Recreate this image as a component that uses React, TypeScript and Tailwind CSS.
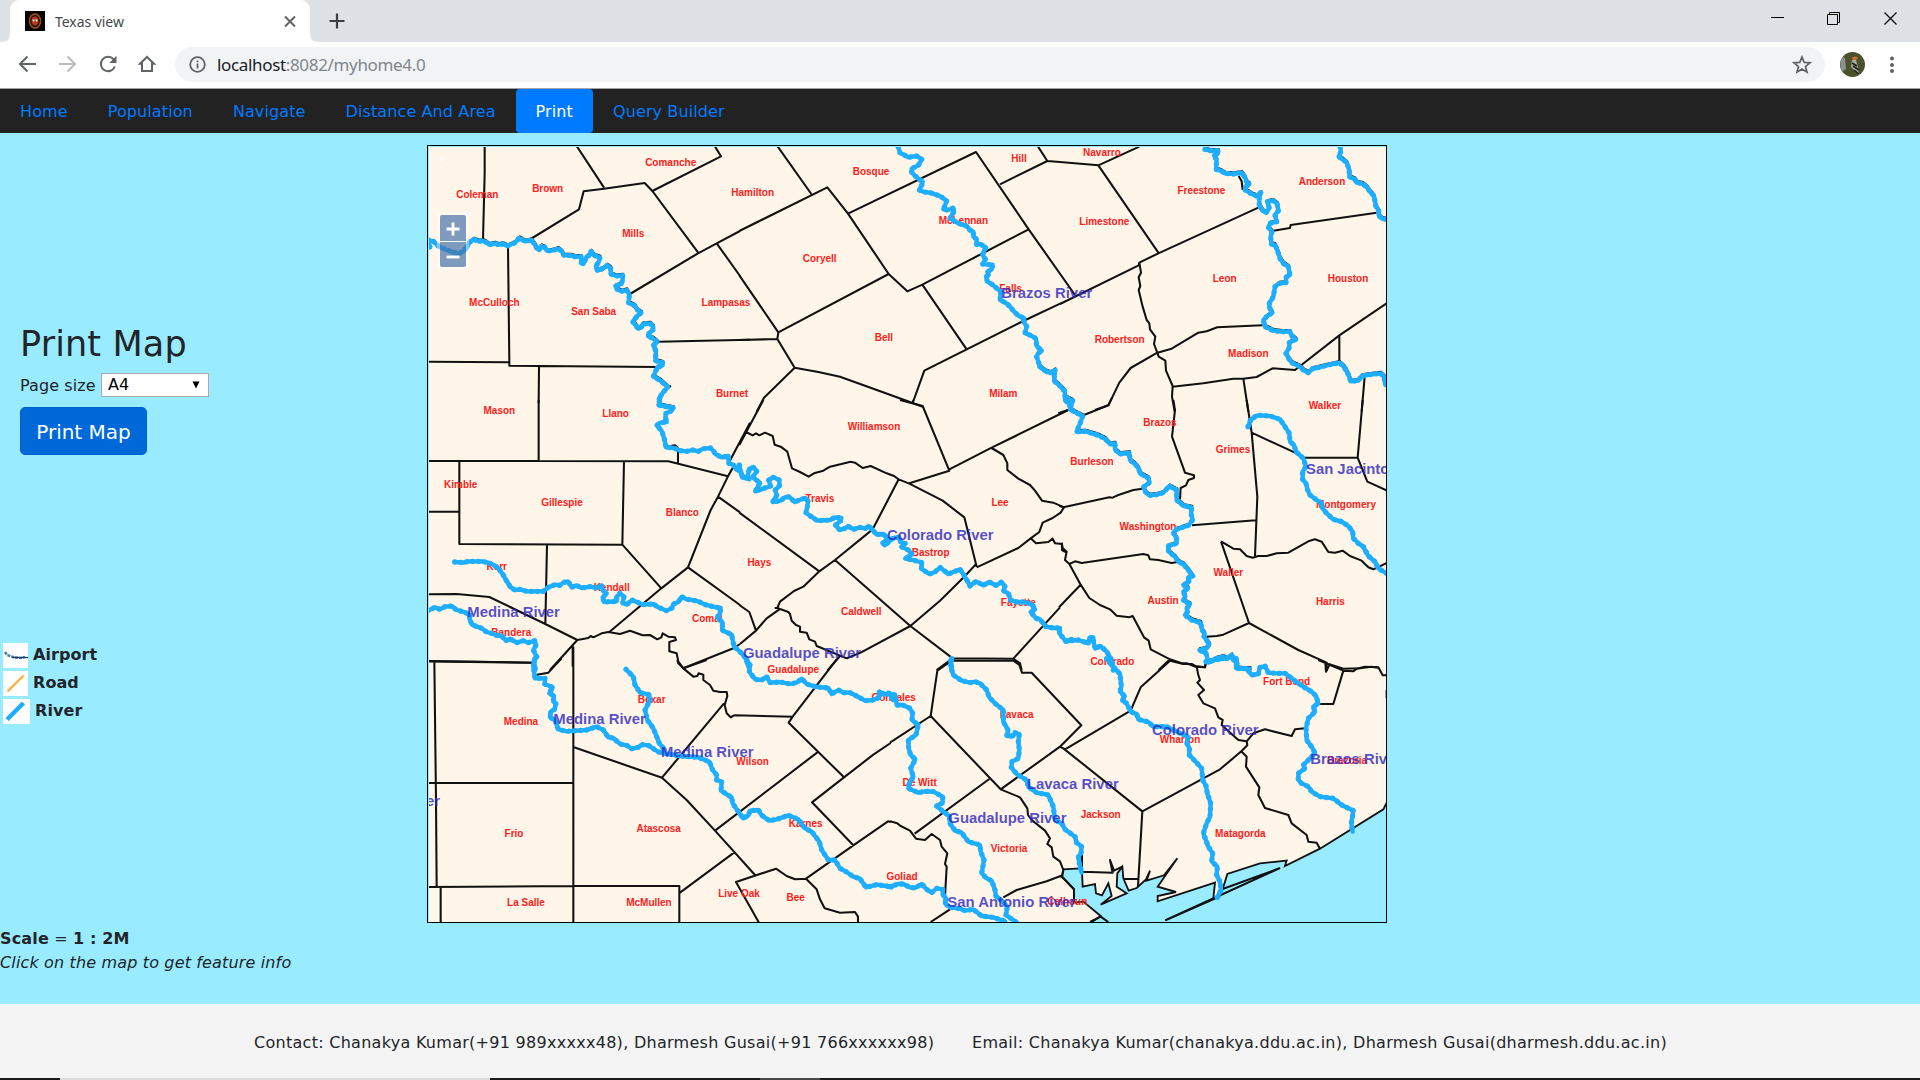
import React from "react";

type Label = [string, number, number];
interface Sheet {
  x: number;
  y: number;
  borders: string;
  rivers: string;
  shaded?: string;
  counties: Label[];
  names: Label[];
}

// Map sheets: every sheet is drawn at three units per pixel from its own origin.
const sheets: Sheet[] = [
  {
    x: 420,
    y: 140,
    borders:
      "M194 18L194 100L189 300M470 18L552 143M332 297L477 208L491 154L552 146L674 129L697 153L903 49L884 18M697 153L834 337M630 462L834 340L890 310L960 273M890 310L960 408M715 605L990 599M264 320L268 667L268 677L715 681M24 665L268 667M357 680L356 790M748 736L752 742",
    rivers: "M24 302L30 322M24 300L40 304L55 318L75 328L95 335L115 341L130 334L140 322",
    shaded:
      "M140 322L148 308L160 298L178 304L188 302L200 308L208 314L225 310L235 314L250 312L262 318L285 308L298 294L315 304L335 300L343 312L350 324L358 330L364 318L374 322L380 332L395 332L415 326L425 334L432 346L450 346L465 350L483 350L484 368L490 372L500 350L508 346L513 334L522 346L540 352L536 366L528 378L532 392L548 386L562 376L572 384L572 402L590 408L608 406L608 418L604 432L586 438L592 448L604 454L620 450L628 464L626 488L645 498L650 508L664 518L652 528L638 545L655 566L664 562L668 552L690 550L700 560L698 572L688 578L684 588L700 596L712 606L700 616L708 634L706 662L728 668L728 676L712 682L700 710L722 722L744 742L732 754L722 768L716 795L740 800L760 804",
    counties: [
      ["Coleman", 172, 174], ["Brown", 383, 155], ["Comanche", 752, 78], ["Mills", 640, 291],
      ["McCulloch", 223, 496], ["San Saba", 521, 525], ["Lampasas", 918, 498], ["Burnet", 936, 770],
    ],
    names: [],
  },
  {
    x: 740,
    y: 140,
    borders:
      "M112 18L214 162M-2 273L262 142L324 221L446 402L502 454L547 434L866 268L708 36L324 221M866 268L1005 465M780 133L922 63L893 18M922 63L960 66M446 402L115 577L112 597L164 683L235 696L300 710L400 746L518 789L548 800M-2 600L112 597M-2 406L115 577M547 434L680 628L553 692L518 789M680 628L850 543L962 490M164 683L72 773L50 815",
    rivers:
      "M474 20L480 38L495 46L505 52L530 48L545 58L535 76L515 86L515 96L525 108L548 125L545 136L538 150L552 156L570 158L600 168L620 182L616 194L610 208L624 210L640 204L642 214L630 235L655 250L680 258L690 270L700 275L700 290L710 298L710 314L720 312L738 322L732 332L728 345L736 358L728 372L745 374L758 374L755 388L742 396L746 404L738 410L742 424L760 436L782 455L780 480L800 490L808 498L820 512L836 528L852 534L852 548L860 558L855 580L872 586L888 596L890 618L905 632L894 640L890 650L900 680L922 696",
    shaded: "M900 680L912 690L922 696L932 698L945 690L942 722L962 740L975 755L975 780L988 792L992 808",
    counties: [
      ["Hamilton", 38, 167], ["Bosque", 393, 104], ["Hill", 837, 64], ["McLennan", 670, 252],
      ["Coryell", 239, 366], ["Falls", 812, 454], ["Bell", 432, 601], ["Milam", 790, 771],
    ],
    names: [["Brazos River", 784, 476]],
  },
  {
    x: 1060,
    y: 140,
    borders:
      "M0 66L115 76L238 20M115 76L295 338M0 492L236 376L238 368L295 340L595 203M238 368L243 398L236 412L241 438L236 450L248 500L260 540L268 550L270 568L286 590L282 612L292 638L296 650L316 662L318 692L338 738L336 770L344 815M292 638L335 626L415 578L440 574L472 562L608 556M292 638L212 684L178 728L145 796L105 810M338 740L430 730L520 716L550 716L590 711L638 685L705 690L838 586L838 668M838 586L980 490M550 716L565 815M640 272L690 264L692 255L950 218M914 710L905 815M536 108L545 124L548 150",
    rivers: "",
    shaded:
      "M435 28L450 32L475 32L474 40L462 46L470 60L468 88L482 92L495 100L520 102L545 98L555 112L560 126L568 132L556 140L556 150L575 162L590 168L602 158L598 172L598 195L608 212L618 218L628 205L622 185L640 182L652 192L655 212L645 225L650 245L630 250L625 262L636 275L632 290L634 312L645 315L652 330L660 355L670 370L685 380L690 405L678 412L678 428L658 430L645 440L640 470L628 490L628 502L637 518L622 528L610 540L615 560L640 572L665 575L690 575L694 586L708 598L688 608L688 622L678 640L685 654L695 668L720 680L730 690L745 698L758 686L770 684L800 676L838 668L852 680L862 698L868 710L872 724L895 722L905 708L930 704L962 700L972 710L976 735M840 20L843 34L836 50L848 58L860 68L868 90L868 110L885 118L890 128L905 130L920 140L930 155L942 168L948 200L956 212L956 226L966 236L980 238",
    counties: [
      ["Navarro", 126, 48], ["Freestone", 424, 162], ["Anderson", 786, 133], ["Limestone", 133, 254],
      ["Leon", 494, 425], ["Houston", 864, 424], ["Robertson", 179, 607], ["Madison", 565, 650],
      ["Walker", 795, 805],
    ],
    names: [],
  },
  {
    x: 420,
    y: 400,
    borders:
      "M356 0V182M24 183L356 183L745 184L924 229M118 184V432L607 434L612 184M24 335H118M738 140L765 136L774 144V188M990 68L928 185M940 200L924 229L894 290L872 330L804 502L724 565L568 696M894 290L960 337M607 434L724 565M381 434L376 672M804 502L960 615M24 583L110 582L208 591L376 672L472 720L505 714L512 708L520 712L545 700L565 696L600 702L630 692L668 706L690 705L712 718L724 712L728 700L745 710L765 712L768 720L748 726L748 754L770 760L775 785L790 805L942 744L960 732M472 720L390 810M458 735V800M24 784L338 788",
    rivers:
      "M718 -4L718 15L740 20L760 24L752 34L738 40L736 52L740 66L722 68L710 76L726 94L730 108L734 120L738 142L762 144L780 152L800 154L818 150L835 154L850 146L872 144L880 152L886 162L905 172L925 168L926 190L940 194L948 208L960 212L968 230L988 238M104 486L130 488L145 484L165 484L185 484L205 488L220 494L235 505L248 522L258 540L272 562L285 570L300 568L320 574L345 574L370 574L385 562L405 554L420 556L430 548L444 544L455 562L470 556L485 564L510 560L530 564L545 558L548 570L560 580L548 592L552 606L590 604L590 590L600 580L612 590L608 608L620 614L636 600L650 606L670 614L700 612L715 622L740 632L756 624L760 612L775 606L785 590L800 598L815 600L835 604L855 614L880 620L902 624L900 640L892 652L908 668L906 690L935 704L942 740L960 755L978 775L985 800M24 632L45 622L60 628L75 620L95 618L110 630L132 636L150 644L148 655L156 674L185 685L200 696L215 700L228 706L245 708L258 722L270 716L290 728L310 722L325 728L345 722L348 735L340 750L350 770L342 785L346 810",
    counties: [
      ["Mason", 238, 41], ["Llano", 587, 50], ["Kimble", 122, 264], ["Gillespie", 426, 316],
      ["Blanco", 787, 348], ["Kerr", 230, 510], ["Kendall", 575, 571], ["Comal", 862, 664], ["Bandera", 274, 706],
    ],
    names: [["Medina River", 142, 651]],
  },
  {
    x: 740,
    y: 400,
    borders:
      "M70 0L-2 135M18 96L38 106L48 100L58 106L75 98L98 108L104 134L122 140L142 155L156 205L180 216L206 230L222 220L250 212L270 200L332 185L345 188L368 204L392 198L440 220L462 228L476 238L508 251L608 302L673 352L710 500M476 238L398 388L285 480L238 514L190 560L162 573L120 605L112 624L104 624M112 624L145 636L150 642L155 662L168 675L180 680L180 695L200 698L208 718L225 725L230 738L320 775L362 758L511 678L285 480M118 628L80 655L48 692L0 732M-2 615L28 636L48 692M-2 338L238 514M480 0L548 18L628 212L508 250M628 208L755 143L985 30M755 144L790 165L802 190L802 210L835 236L870 255L885 272L906 302L940 308L972 322L962 338L938 354L908 368L898 396L872 415L835 444L710 502M872 415L888 430L925 426L938 416L945 430L966 432L966 450L980 458M710 490L675 528L600 602L511 678L638 775L820 776L960 622M638 775L590 810M820 776L840 790L845 810M300 768L262 812M520 0L518 10",
    rivers:
      "M-2 195L2 215L8 232L22 232L28 206L42 202L50 214L38 232L60 248L46 274L75 264L92 258L86 240L100 232L118 240L118 258L106 270L110 286L98 306L122 302L134 292L148 290L164 306L178 300L196 294L204 304L202 320L198 338L214 350L232 362L270 360L285 352L304 354L302 362L286 376L300 390L318 384L324 378L340 388L360 382L376 386L386 378L400 392L410 404L430 402L444 416L428 428L434 436L460 414L478 412L482 426L496 430L484 440L505 450L515 462L496 476L520 480L546 488L544 506L568 522L585 516L600 502L625 522L645 514L660 508L675 530L690 558L708 544L730 556L748 546L768 556L785 546L795 560L790 572L805 580L812 600L830 606L850 606L875 612L885 628L872 636L888 655L900 658L918 680L940 684L960 684L958 700L978 724L995 718M632 782L636 810",
    counties: [
      ["Williamson", 402, 88], ["Travis", 240, 306], ["Lee", 780, 318], ["Bastrop", 572, 467],
      ["Hays", 58, 498], ["Caldwell", 364, 643], ["Fayette", 835, 618],
    ],
    names: [["Colorado River", 441, 421], ["Guadalupe River", 9, 774]],
  },
  {
    x: 1060,
    y: 400,
    borders:
      "M-5 40L30 28M70 46L145 16L155 -5M340 0L345 30L336 110L375 218L402 226L402 234L385 240L378 256L362 264L360 298M560 0L575 98L592 290L585 468M575 98L705 158L730 173H893L908 0M893 173L922 245L982 272M10 322L148 292L158 293L175 285L220 270L248 266M-2 318L12 322M396 376L587 361M5 428L8 444L20 455L15 480L28 492L45 484L65 489L250 462L265 466L270 478L295 480L335 489L352 486M28 492L62 554L88 594L120 615L150 628L170 647L208 652L218 648L252 712L266 722L272 748L330 778L365 790L380 790L405 800L435 802L438 786M62 554L-3 622M330 778L296 810M483 424L520 446L540 448L560 468L578 473L595 468L620 468L650 460L685 458L745 424L765 418L785 425L805 456L825 458L848 452L870 468L905 482L925 502L940 508L982 488M483 424L567 669L715 750L800 788V812M438 710L470 708L490 704L567 669M806 792L850 806L900 805L935 800L955 803",
    rivers:
      "M564 80L572 60L585 50L595 46L630 48L660 58L675 80L688 100L690 125L702 135L708 155L730 175L738 200L728 215L728 238L738 250L742 268L750 285L770 300L785 310L788 325L800 340L820 358L845 365L865 378L878 395L880 415L895 430L910 440L925 468L945 485L955 505L980 520M18 724L55 720L85 730L88 714L100 712L100 722L106 746L122 738L140 755L155 780L160 810",
    shaded:
      "M22 -6L38 2L30 28L45 36L68 48L62 66L50 95L75 94L90 98L115 106L135 116L150 132L165 130L165 148L180 162L208 158L210 180L225 192L236 205L240 220L266 235L268 248L250 262L258 278L268 286L290 284L310 278L328 258L350 270L350 300L372 318L395 322L393 340L398 360L385 376L350 388L340 398L350 415L350 430L324 438L326 455L345 470L355 485L370 492L385 510L398 528L385 532L388 545L370 555L384 565L370 575L376 590L370 602L390 612L380 625L382 636L375 645L395 660L422 668L426 690L434 700L432 710L448 732L440 745L418 750L438 760L445 788L460 780L470 775L490 770L500 776L515 765L518 778L530 785L528 804L548 806L570 806",
    counties: [
      ["Brazos", 300, 78], ["Burleson", 96, 193], ["Grimes", 519, 159], ["Montgomery", 858, 323],
      ["Washington", 264, 388], ["Waller", 505, 526], ["Austin", 309, 612], ["Harris", 811, 614],
      ["Colorado", 157, 793],
    ],
    names: [["San Jacinto River", 738, 223]],
  },
  {
    x: 420,
    y: 660,
    borders:
      "M24 3L338 8L342 46L385 38L425 -5M43 3L48 420L50 680M460 -40V790M24 369H460M24 681L460 678H778V790M62 681V790M462 262L726 353L800 420L885 512L1005 645M726 353L912 130M885 512L1195 275M942 578L780 698M772 0L775 10L790 25L820 50L832 48L836 40L850 44L850 60L870 75L880 92L900 96L920 96L922 108L914 135L920 160L932 172L942 166L1118 170L1106 188L1272 352L1360 284L1412 249M790 25L860 0M1118 170L1250 -2M1272 352L1176 427L1300 556M1018 790L948 666L1068 626L1100 648L1125 658L1158 656L1300 556L1404 484L1412 486M1158 656L1190 688L1200 718L1214 745L1260 758L1305 756L1314 770V790",
    rivers:
      "M980 0L990 15L988 35L1005 58L1025 60L1040 50L1050 68L1080 66L1110 72L1130 68L1145 56L1160 72L1185 80L1225 84L1235 102L1255 90L1270 98L1290 98L1310 108L1335 122L1360 120L1378 112L1378 94L1395 104L1410 100L1418 120M345 -4L340 20L345 55L375 55L374 72L398 82L388 100L402 108L400 125L408 130L404 148L392 155L390 172L405 180L415 208L440 214L500 210L530 200L550 210L565 232L580 234L600 252L620 256L635 266L655 262L665 254L685 256L715 276L780 288L835 292L868 305L878 330L890 345L890 360L905 365L903 392L935 412L938 430L955 455L970 475L985 466L990 452L1015 450L1025 466L1048 482L1070 478L1105 466L1135 478L1155 505L1175 515L1198 545L1205 570L1225 600L1245 600L1260 625L1280 636L1300 650L1320 656L1338 682L1370 674L1400 678L1415 682M618 28L640 50L645 75L660 98L688 104L690 120L675 150L682 180L700 205L718 250L735 270",
    counties: [
      ["Guadalupe", 1120, 39], ["Gonzales", 1421, 122], ["Bexar", 695, 128], ["Medina", 303, 193],
      ["Wilson", 998, 315], ["Atascosa", 716, 514], ["Frio", 282, 529], ["Karnes", 1157, 500],
      ["La Salle", 318, 736], ["McMullen", 687, 736], ["Live Oak", 957, 710], ["Bee", 1127, 723],
    ],
    names: [["Medina River", 400, 194], ["Medina River", 723, 293]],
  },
  {
    x: 890,
    y: 660,
    borders:
      "M0 248L122 168L142 32L185 2H370L388 15L396 38L425 38L574 196L510 260L332 388L122 168M510 260L525 268L722 152L752 82L840 2L880 12L905 12L920 20L925 45L930 60L922 68L942 90L925 105L940 130L975 145L985 172L998 180L995 195L1045 240L1070 244L1090 220L1125 208L1205 228L1215 208L1245 205M915 18L945 22L948 0M520 265L757 454L990 328L1054 274L1072 256L1070 244M757 454L744 680M700 657H744M298 357L74 521M332 388L390 412L412 445L414 465L425 480L465 512L480 535L472 552L485 562L490 590L510 604L520 630L516 650L552 688V728M0 484L22 490L32 498L60 512L78 536L105 540L125 522L150 540L155 560L172 580L165 612L170 620L165 710M122 786L180 748M340 712L380 690L470 664L520 645M1054 274L1070 290L1068 320L1108 382L1105 405L1125 444L1195 465L1205 490L1250 525L1255 545L1280 548L1290 566M1285 0L1360 32L1330 132H1290M1306 8L1308 35L1318 15M1360 32L1390 34L1400 26L1425 20L1465 22L1478 46L1492 46M1490 90V115M578 635L668 638L660 600L672 632L697 620M576 570V640M996 688L1168 625L828 780L990 709M600 786L632 770L655 786",
    rivers:
      "M650 -4L665 15L690 42L692 60L694 80L690 95L704 108L697 122L710 130L722 155L740 162L745 178L775 186L790 200L830 200L860 215L895 230L890 248L898 265L898 285L920 308L935 325L938 360L948 378L952 400L962 430L960 470L950 490L940 520L955 560L968 580L965 604L982 620L980 645L990 665L993 690L982 712M948 5L975 0L1005 -5L1022 -10L1040 -4L1042 25L1070 25L1085 45L1105 42L1110 22L1125 18L1135 38L1160 40L1185 40L1205 55L1225 70L1240 80L1265 95L1278 108L1285 130L1270 140L1275 155L1255 175L1248 205L1250 240L1268 265L1275 280L1255 300L1240 315L1245 325L1225 340L1225 360L1235 370L1255 380L1265 395L1290 410L1330 415L1355 435L1390 452L1384 490L1388 515M-5 100L15 105L20 135L38 135L60 145L68 160L66 180L85 195L78 225L55 240L56 265L62 285L76 298L62 325L70 350L58 370L55 385L85 398L105 394L130 395L158 410L158 428L140 438L160 455L178 468L180 490L195 512L215 518L235 545L270 555L272 575L282 600L275 640L290 655L305 662L315 690L318 708L335 722L352 740L348 765L378 786M0 680L25 672L40 672L60 682L75 684L95 672L110 688L125 698L140 685L158 688L158 702L168 715L165 730L180 742L210 746L225 752L250 748L275 768L310 772L345 784M185 -4L182 20L190 45L215 62L240 68L255 65L270 70L290 90L298 112L315 130L340 150L340 185L355 212L350 228L370 228L375 218L388 222L385 245L388 270L385 295L366 305L364 322L380 342L410 360L415 380L440 398L475 405L490 440L495 480L515 490L525 508L555 530L560 548L575 560L573 580L565 590L568 610L575 638",
    counties: [
      ["Fort Bend", 1190, 74], ["Lavaca", 380, 173], ["Wharton", 870, 247], ["De Witt", 89, 378],
      ["Brazoria", 1371, 310], ["Jackson", 632, 472], ["Matagorda", 1051, 529], ["Victoria", 357, 576],
      ["Goliad", 36, 658], ["Calhoun", 532, 735],
    ],
    names: [
      ["Colorado River", 786, 225], ["Brazos River", 1261, 314], ["Lavaca River", 411, 387],
      ["Guadalupe River", 175, 491], ["San Antonio River", 172, 741],
    ],
  },
];

const bay =
  "M1494 420L1480 448L1290 566L1185 618L1190 602L1110 610L1012 642L998 688L982 712L970 715L975 668L803 724V708L858 696L803 680L862 595L822 646L770 662L780 632L768 658L740 684L716 692L700 655L697 620L682 640L680 680L710 700L632 734L665 708L655 670L636 706L618 700L615 672L578 680L576 636L570 625L520 628L516 650L552 688V728L580 725L632 768L600 790H1494Z";

const at = (s: { x: number; y: number }) => `translate(${s.x} ${s.y}) scale(0.33333)`;

function TexasMap() {
  return (
    <svg className="block h-[775px] w-[957px]" viewBox="429 147 957 775" fontFamily="'Liberation Sans', Arial, sans-serif" fontWeight="700">
      <rect x="429" y="147" width="957" height="775" fill="#fff6e9" />
      <path transform="translate(890 660) scale(0.33333)" d={bay} fill="#99ebff" stroke="#111" strokeWidth="5.5" />
      <g fill="none" stroke="#111" strokeWidth="6.2" strokeLinejoin="round">
        {sheets.map((s, i) => (
          <path key={i} transform={at(s)} d={s.borders} />
        ))}
      </g>
      <g fill="#ff2020" fontSize="30" textAnchor="middle">
        {sheets.map((s, i) => (
          <g key={i} transform={at(s)}>
            {s.counties.map(([t, x, y]) => (
              <text key={t} x={x} y={y + 1}>{t}</text>
            ))}
          </g>
        ))}
      </g>
      <g fill="none" strokeLinejoin="round" strokeLinecap="round">
        {sheets.map((s, i) => (
          <g key={i} transform={at(s)}>
            {s.shaded && <path d={s.shaded} transform="translate(1.5 -5)" stroke="#111" strokeWidth="6" />}
            <path d={s.rivers + (s.shaded ?? "")} stroke="#1eaeff" strokeWidth="13" />
            <path d={s.rivers + (s.shaded ?? "")} stroke="#1eaeff" strokeWidth="16" strokeDasharray="1 17" />
          </g>
        ))}
      </g>
      <g fill="#2f2abf" fillOpacity="0.82" fontSize="44.6">
        {sheets.map((s, i) => (
          <g key={i} transform={at(s)}>
            {s.names.map(([t, x, y], k) => (
              <text key={k} x={x} y={y - 1}>{t}</text>
            ))}
          </g>
        ))}
        <text transform="translate(420 660) scale(0.33333)" x="60" y="439" fontSize="44.6" textAnchor="end">River</text>
      </g>
      <circle cx="441.5" cy="159" r="2.5" fill="#fff" fillOpacity="0.7" />
    </svg>
  );
}

function BrowserBar() {
  const s = { fill: "none", stroke: "#5f6368", strokeWidth: 2 } as const;
  return (
    <div className="font-['Noto_Sans',sans-serif]">
      <div className="flex h-[42px] bg-[#dee1e6] pl-[10px]">
        <div className="relative flex w-[300px] items-center rounded-t-[9px] bg-white pl-[15px] pr-[13px]">
          <svg className="absolute -left-[8px] bottom-0" width="8" height="8"><path d="M8 0V8H0Q8 8 8 0" fill="#fff" /></svg>
          <svg className="absolute -right-[8px] bottom-0" width="8" height="8"><path d="M0 0V8H8Q0 8 0 0" fill="#fff" /></svg>
          <svg width="20" height="20" viewBox="0 0 20 20">
            <rect width="20" height="20" fill="#050403" />
            <ellipse cx="10" cy="10" rx="5.6" ry="7" fill="#2a1304" stroke="#9a5312" strokeWidth="1.4" />
            <ellipse cx="10" cy="10" rx="3.4" ry="4.4" fill="#b03a20" />
            <circle cx="8.6" cy="9.4" r="1.1" fill="#e8d8d8" />
            <circle cx="11.6" cy="9.4" r="1.1" fill="#e8d8d8" />
          </svg>
          <span className="ml-[10px] flex-1 whitespace-nowrap text-[14px] tracking-[-0.05px] text-[#45494d]">Texas view</span>
          <svg width="14" height="14" viewBox="0 0 14 14" {...s}><path d="M2 2.5L12 12.5M12 2.5L2 12.5" /></svg>
        </div>
        <svg className="ml-[19px] mt-[13px]" width="16" height="16" viewBox="0 0 16 16" stroke="#3c4043" strokeWidth="2.2"><path d="M8 .5V15.5M.5 8H15.5" /></svg>
        <div className="ml-auto flex gap-[42px] pr-[22px] pt-[11px]">
          <svg width="14" height="14" stroke="#000"><path d="M0 6.5H13" /></svg>
          <svg width="14" height="14" stroke="#000" fill="none"><path d="M.5 3.5H10.5V13.5H.5ZM2.5 3.5V1.5H12.5V11.5H10.5" /></svg>
          <svg className="ml-px" width="14" height="14" stroke="#000" strokeWidth="1.2"><path d="M.5 1.5L12.5 13.5M12.5 1.5L.5 13.5" /></svg>
        </div>
      </div>
      <div className="flex h-[46px] items-start bg-white pl-[18px]">
        <svg className="mt-[13px]" width="18" height="18" viewBox="0 0 18 18" {...s}><path d="M18 9H2.5M9.5 1.5L2 9L9.5 16.5" /></svg>
        <svg className="ml-[23px] mt-[13px]" width="18" height="18" viewBox="0 0 18 18" {...s} stroke="#babcbe"><path d="M0 9H15.5M8.5 1.5L16 9L8.5 16.5" /></svg>
        <svg className="ml-[22px] mt-[13px]" width="18" height="18" viewBox="0 0 18 18" {...s}><path d="M15.8 11.5A7.2 7.2 0 1 1 14.6 4.4" /><path d="M17.5 .8V8H10.3Z" fill="#5f6368" stroke="none" /></svg>
        <svg className="ml-[21px] mt-[13px]" width="18" height="18" viewBox="0 0 18 18" {...s}><path d="M9 2L16 8.8H14V16H4V8.8H2Z" /></svg>
        <div className="ml-[19px] mt-[5px] flex h-[35px] w-[1650px] items-center rounded-full bg-[#f1f3f4] pl-[14px] pr-[13px]">
          <svg width="17" height="17" viewBox="0 0 17 17" {...s} strokeWidth="1.8"><circle cx="8.5" cy="8.5" r="7.3" /><path d="M8.5 7.5V12.5M8.5 4.5V6.2" /></svg>
          <span className="ml-[11px] flex-1 whitespace-nowrap text-[17px] tracking-[-0.34px] text-[#80868b]"><span className="text-[#202124]">localhost</span>:8082/myhome4.0</span>
          <svg width="20" height="20" viewBox="0 0 20 20" {...s} strokeWidth="1.7"><path d="M10 2L12.2 7.4L18 7.8L13.5 11.5L15 17.2L10 14.1L5 17.2L6.500 11.5L2 7.8L7.8 7.4Z" /></svg>
        </div>
        <svg className="ml-[15px] mt-[10px] rounded-full" width="25" height="25" viewBox="0 0 25 25">
          <rect width="25" height="25" fill="#4a522c" />
          <path d="M0 4L5 6L6 17L1 20Z" fill="#8c8f90" />
          <path d="M12 8L16 8L18 15L19 23L15 19L11 15Z" fill="#a9a69e" />
          <path d="M13 14L19 18M14 18L19 22M12 11L17 14" stroke="#23211c" strokeWidth="1.6" />
          <path d="M12 6Q15 3 18 6L16 8H13Z" fill="#d86a35" />
        </svg>
        <svg className="ml-[24px] mt-[14px]" width="6" height="18" fill="#5f6368"><circle cx="3" cy="2.500" r="2" /><circle cx="3" cy="9" r="2" /><circle cx="3" cy="15" r="2" /></svg>
      </div>
    </div>
  );
}

const nav = ["Home", "Population", "Navigate", "Distance And Area", "Print", "Query Builder"];

export default function App() {
  return (
    <div className="flex h-[1080px] w-[1920px] flex-col overflow-hidden bg-[#99ebff] font-['DejaVu_Sans',Verdana,sans-serif] text-base text-[#212529]">
      <BrowserBar />
      <nav className="flex h-[45px] border-t border-[#a3a3a3] bg-[#222]">
        {nav.map((n) => (
          <a key={n} className={n === "Print" ? "h-[44px] rounded-[4px] bg-[#007bff] px-5 text-[16px]/[46px] tracking-[0.11px] text-white" : "px-5 text-[16px]/[46px] tracking-[0.11px] text-[#007bff]"}>{n}</a>
        ))}
      </nav>
      <main className="flex h-[790px] shrink-0">
        <aside className="flex w-[427px] flex-col">
          <h2 className="ml-5 mt-[190px] text-[35px]/[42px] tracking-[0.14px]">Print Map</h2>
          <div className="ml-5 mt-[8px] flex h-[24px] items-center">
            <span className="w-[81px] whitespace-nowrap pt-[2px] tracking-[0.1px]">Page size</span>
            <div className="flex h-[24px] w-[108px] items-center justify-between border border-[#a9a9a9] bg-white pl-[6px] pr-[8px] text-black">
              <span>A4</span>
              <svg width="8" height="8"><path d="M.5 .5H7.500L4 7.500Z" /></svg>
            </div>
          </div>
          <button className="ml-5 mt-[10px] h-[48px] w-[127px] rounded-[5px] border border-[#0062cc] bg-[#0069d9] pt-[2px] text-[20px] text-white">Print Map</button>
          <div className="ml-[3px] mt-[188px] flex flex-col gap-[3px] font-bold tracking-[0.08px]">
            <div className="flex h-[25px] items-center gap-[5px]">
              <svg width="25" height="25" viewBox="0 0 25 25"><rect width="25" height="25" fill="#fff" /><path d="M2 9L4 12L7 13L12 14.500L18 15L22 14" fill="none" stroke="#4e79a8" strokeWidth="2.4" strokeDasharray="3 1" /><path d="M9 14.500H25" stroke="#173a66" strokeWidth="1.3" /></svg>
              <span className="pb-[2px] leading-[22px]">Airport</span>
            </div>
            <div className="flex h-[25px] items-center gap-[5px]">
              <svg width="25" height="25" viewBox="0 0 25 25"><rect width="25" height="25" fill="#fff" /><path d="M4.500 20.500L20.500 4.500" stroke="#ffab38" strokeWidth="2.2" /></svg>
              <span className="pb-[2px] leading-[22px]">Road</span>
            </div>
            <div className="flex h-[25px] items-center gap-[5px]">
              <svg width="27" height="25" viewBox="0 0 27 25"><rect width="27" height="25" fill="#fff" /><path d="M4 20.500L20.500 4" stroke="#1eaeff" strokeWidth="4.4" /></svg>
              <span className="pb-[2px] leading-[22px]">River</span>
            </div>
          </div>
        </aside>
        <section className="relative mt-[12px] h-[778px] w-[960px] border border-black pl-px pt-px">
          <TexasMap />
          <div className="absolute left-[9px] top-[66px] flex w-[32px] flex-col gap-px rounded-[4px] bg-white/40 p-[3px]">
            <div className="flex h-[26px] w-[26px] items-center justify-center rounded-t-[2px] bg-[#003c88]/50 pt-[2px]"><svg width="14" height="14" stroke="#fff" strokeWidth="2.800"><path d="M.5 7H13.500M7 .5V13.500" /></svg></div>
            <div className="flex h-[25px] w-[26px] items-center justify-center rounded-b-[2px] bg-[#003c88]/50"><svg className="mt-[5px]" width="14" height="4" stroke="#fff" strokeWidth="2.800"><path d="M.5 2H13.500" /></svg></div>
          </div>
        </section>
      </main>
      <div className="h-[81px] shrink-0 pt-[4px] leading-[24px] tracking-[0.15px]">
        <p><b>Scale</b> = <b>1 : 2M</b></p>
        <p className="italic">Click on the map to get feature info</p>
      </div>
      <footer className="flex h-[74px] shrink-0 items-center bg-[#f4f4f4] pl-[254px] pt-[3px] tracking-[0.28px]">
        <span className="w-[718px] whitespace-nowrap">Contact: Chanakya Kumar(+91 989xxxxx48), Dharmesh Gusai(+91 766xxxxxx98)</span>
        <span className="whitespace-nowrap">Email: Chanakya Kumar(chanakya.ddu.ac.in), Dharmesh Gusai(dharmesh.ddu.ac.in)</span>
      </footer>
      <div className="flex h-[2px] shrink-0 bg-[#1d1a1c]">
        <div className="ml-[60px] w-[430px] bg-[#dcdcdc]" />
        <div className="ml-[270px] w-[60px] bg-[#484648]" />
      </div>
    </div>
  );
}
